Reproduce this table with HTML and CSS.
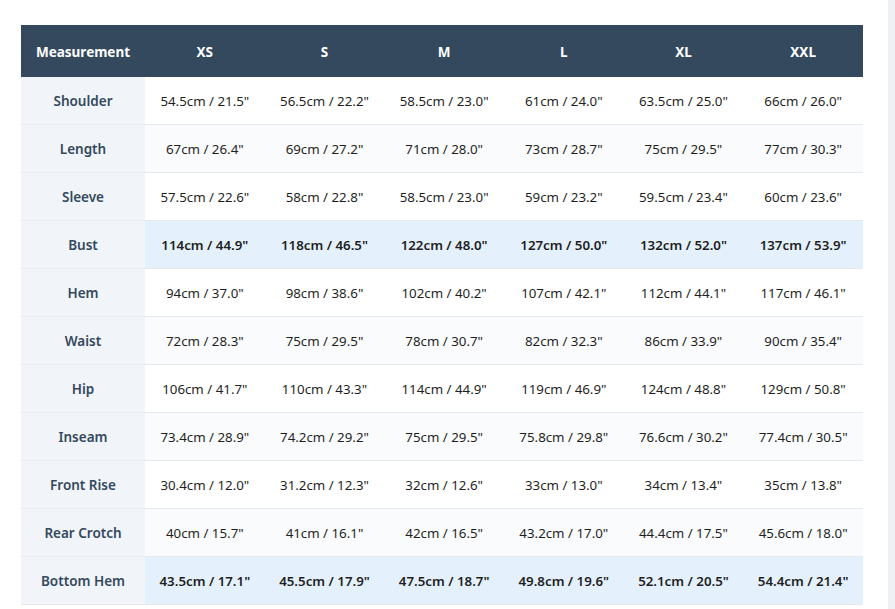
FILE: index.html
```html
<!DOCTYPE html>
<html lang="en">
<head>
<meta charset="utf-8">
<title>Size Chart</title>
<link rel="stylesheet" href="styles.css">
</head>
<body>
<div class="page">
  <main class="main">
    <table class="chart">
      <thead>
        <tr><th class="label">Measurement</th><th>XS</th><th>S</th><th>M</th><th>L</th><th>XL</th><th>XXL</th></tr>
      </thead>
      <tbody>
        <tr><td class="label">Shoulder</td><td>54.5cm / 21.5"</td><td>56.5cm / 22.2"</td><td>58.5cm / 23.0"</td><td>61cm / 24.0"</td><td>63.5cm / 25.0"</td><td>66cm / 26.0"</td></tr>
        <tr><td class="label">Length</td><td>67cm / 26.4"</td><td>69cm / 27.2"</td><td>71cm / 28.0"</td><td>73cm / 28.7"</td><td>75cm / 29.5"</td><td>77cm / 30.3"</td></tr>
        <tr><td class="label">Sleeve</td><td>57.5cm / 22.6"</td><td>58cm / 22.8"</td><td>58.5cm / 23.0"</td><td>59cm / 23.2"</td><td>59.5cm / 23.4"</td><td>60cm / 23.6"</td></tr>
        <tr class="key"><td class="label">Bust</td><td>114cm / 44.9"</td><td>118cm / 46.5"</td><td>122cm / 48.0"</td><td>127cm / 50.0"</td><td>132cm / 52.0"</td><td>137cm / 53.9"</td></tr>
        <tr><td class="label">Hem</td><td>94cm / 37.0"</td><td>98cm / 38.6"</td><td>102cm / 40.2"</td><td>107cm / 42.1"</td><td>112cm / 44.1"</td><td>117cm / 46.1"</td></tr>
        <tr><td class="label">Waist</td><td>72cm / 28.3"</td><td>75cm / 29.5"</td><td>78cm / 30.7"</td><td>82cm / 32.3"</td><td>86cm / 33.9"</td><td>90cm / 35.4"</td></tr>
        <tr><td class="label">Hip</td><td>106cm / 41.7"</td><td>110cm / 43.3"</td><td>114cm / 44.9"</td><td>119cm / 46.9"</td><td>124cm / 48.8"</td><td>129cm / 50.8"</td></tr>
        <tr><td class="label">Inseam</td><td>73.4cm / 28.9"</td><td>74.2cm / 29.2"</td><td>75cm / 29.5"</td><td>75.8cm / 29.8"</td><td>76.6cm / 30.2"</td><td>77.4cm / 30.5"</td></tr>
        <tr><td class="label">Front Rise</td><td>30.4cm / 12.0"</td><td>31.2cm / 12.3"</td><td>32cm / 12.6"</td><td>33cm / 13.0"</td><td>34cm / 13.4"</td><td>35cm / 13.8"</td></tr>
        <tr><td class="label">Rear Crotch</td><td>40cm / 15.7"</td><td>41cm / 16.1"</td><td>42cm / 16.5"</td><td>43.2cm / 17.0"</td><td>44.4cm / 17.5"</td><td>45.6cm / 18.0"</td></tr>
        <tr class="key"><td class="label">Bottom Hem</td><td>43.5cm / 17.1"</td><td>45.5cm / 17.9"</td><td>47.5cm / 18.7"</td><td>49.8cm / 19.6"</td><td>52.1cm / 20.5"</td><td>54.4cm / 21.4"</td></tr>
      </tbody>
    </table>
  </main>
  <div class="rail"></div>
</div>
</body>
</html>
```
FILE: styles.css
```css
html, body {
  margin: 0;
  padding: 0;
  background: #ffffff;
  overflow: hidden;
}
body {
  font-family: "Noto Sans", "Open Sans", sans-serif;
  color: #222;
}
.page {
  display: flex;
  height: 609px;
}
.main {
  flex: 1;
  padding: 25px 25px 0 21px;
}
.rail {
  width: 7px;
  background: #eef0f3;
}
.chart {
  width: 842px;
  border-collapse: collapse;
  table-layout: fixed;
  font-size: 13.3px;
}
.chart th {
  background: #34495e;
  color: #fff;
  font-weight: 700;
  font-size: 13.5px;
  height: 50px;
  padding: 2px 0 0;
  text-align: center;
  width: 119.66px;
}
.chart th.label {
  width: 124px;
}
.chart td {
  height: 46px;
  padding: 1px 0 0;
  text-align: center;
  border-bottom: 1px solid #e6eaee;
  color: #1f1f1f;
}
.chart tbody tr:nth-child(even) td {
  background: #fafbfc;
}
.chart tbody tr.key td {
  background: #e4f1fc;
  font-weight: 600;
}
.chart tbody tr td.label {
  background: #f1f4f8;
  color: #34495e;
  font-weight: 600;
  font-size: 13.5px;
}
```
